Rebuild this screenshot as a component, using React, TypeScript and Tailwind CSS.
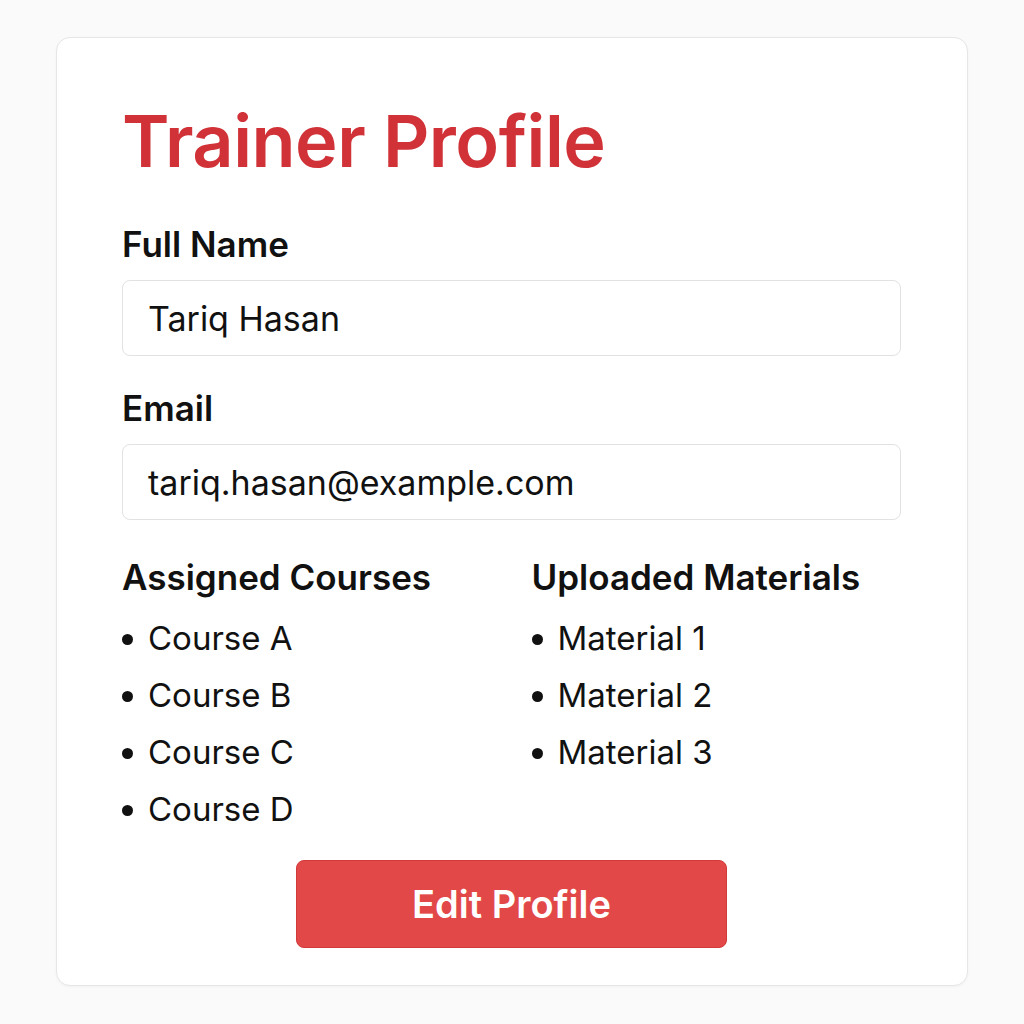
import React from 'react'

const courses = ['Course A', 'Course B', 'Course C', 'Course D']
const materials = ['Material 1', 'Material 2', 'Material 3']

function Field({ label, value }: { label: string; value: string }) {
  return (
    <div className="flex flex-col">
      <label className="text-[35px] font-semibold leading-[40px] text-[#111]">{label}</label>
      <div className="mt-[16px] flex h-[76px] items-center rounded-[8px] border border-[#e2e2e2] bg-white px-[25px] text-[34px] text-[#111]">
        {value}
      </div>
    </div>
  )
}

function BulletList({ title, items }: { title: string; items: string[] }) {
  return (
    <div>
      <h3 className="text-[35px] font-semibold leading-[40px] text-[#111]">{title}</h3>
      <ul className="mt-[13px] flex flex-col">
        {items.map((item) => (
          <li key={item} className="flex h-[57px] items-center text-[33px] text-[#111]">
            <span className="mr-[15px] mt-[2px] h-[11px] w-[11px] rounded-full bg-[#111]" />
            {item}
          </li>
        ))}
      </ul>
    </div>
  )
}

export default function App() {
  return (
    <div
      className="flex min-h-[1024px] justify-center bg-[#fafafa] pt-[37px]"
      style={{ fontFamily: 'Inter, "Noto Sans", sans-serif' }}
    >
      <div className="h-[949px] w-[912px] rounded-[14px] border border-[#e6e6e6] bg-white pl-[65px] pr-[66px] pt-[63px] shadow-[0_1px_3px_rgba(0,0,0,0.04)]">
        <h1 className="text-[72px] font-semibold leading-[80px] tracking-[-0.5px] text-[#d03238]">Trainer Profile</h1>
        <div className="mt-[43px] flex flex-col gap-[32px]">
          <Field label="Full Name" value="Tariq Hasan" />
          <Field label="Email" value="tariq.hasan@example.com" />
        </div>
        <div className="mt-[37px] grid grid-cols-2 gap-x-[40px]">
          <BulletList title="Assigned Courses" items={courses} />
          <BulletList title="Uploaded Materials" items={materials} />
        </div>
        <div className="mt-[22px] flex justify-center">
          <button className="h-[88px] w-[431px] rounded-[8px] border border-[#d23a3a] bg-[#e24848] text-[38px] font-semibold text-white">
            Edit Profile
          </button>
        </div>
      </div>
    </div>
  )
}
